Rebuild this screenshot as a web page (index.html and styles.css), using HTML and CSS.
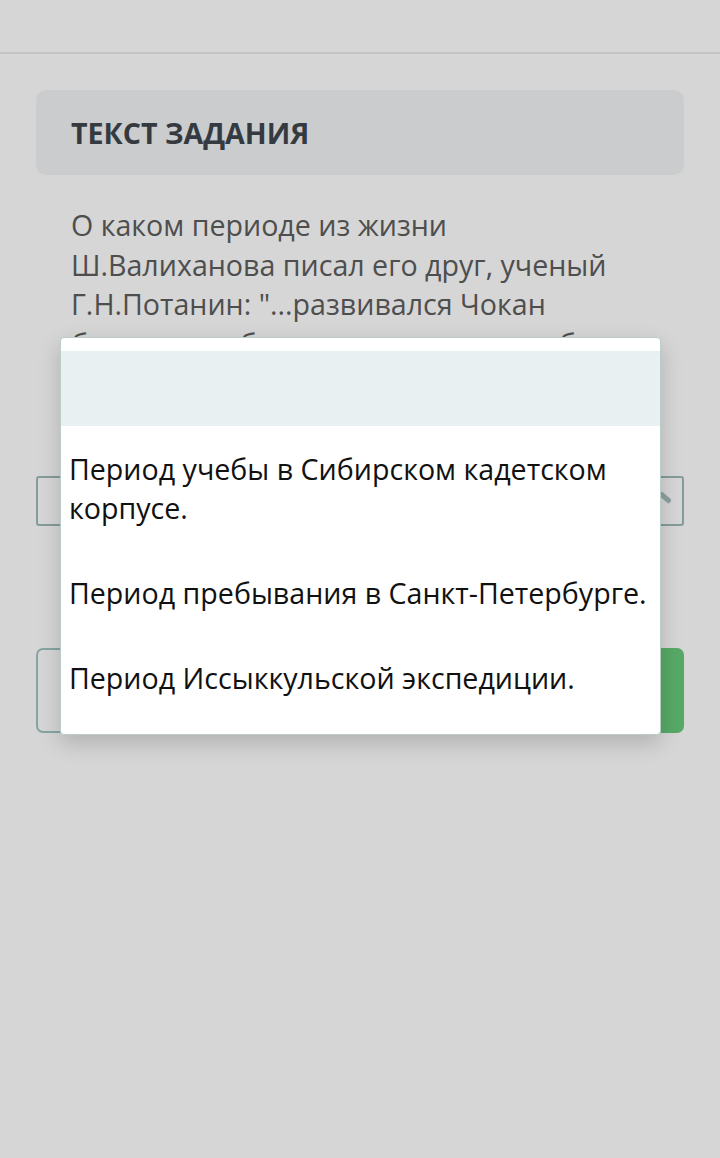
FILE: index.html
```html
<!DOCTYPE html>
<html lang="ru">
<head>
<meta charset="utf-8">
<title>Текст задания</title>
<link rel="stylesheet" href="styles.css">
</head>
<body>
<div class="topbar"></div>
<main class="content">
  <div class="task-head">ТЕКСТ ЗАДАНИЯ</div>
  <p class="question">О каком периоде из жизни Ш.Валиханова писал его друг, ученый Г.Н.Потанин: "...развивался Чокан быстро, как будто в его голове все было приготовлено"?</p>
  <div class="select">
    <span class="arrow"></span>
  </div>
  <div class="actions">
    <div class="btn-outline"></div>
    <div class="btn-green"></div>
  </div>
</main>
<div class="popup">
  <div class="opt opt-empty"></div>
  <div class="opt">Период учебы в Сибирском кадетском корпусе.</div>
  <div class="opt">Период пребывания в Санкт-Петербурге.</div>
  <div class="opt">Период Иссыккульской экспедиции.</div>
</div>
</body>
</html>
```

FILE: styles.css
```css
html, body {
  margin: 0;
  padding: 0;
}
body {
  background: #d6d6d6;
  font-family: "Open Sans", "Noto Sans", sans-serif;
  width: 720px;
  height: 1158px;
  position: relative;
  overflow: hidden;
}
.topbar {
  height: 52px;
  border-bottom: 2px solid #c4c4c4;
}
.content {
  padding: 36px 36px 0 36px;
  display: flex;
  flex-direction: column;
}
.task-head {
  background: #cbcccd;
  border-radius: 10px;
  height: 85px;
  display: flex;
  align-items: center;
  padding-left: 35px;
  font-weight: 700;
  font-size: 28.6px;
  color: #343a40;
}
.question {
  margin: 30px 0 0 0;
  padding: 0 35px;
  font-size: 28.6px;
  line-height: 39.5px;
  color: #4e4e4e;
  height: 234px;
  overflow: hidden;
}
.select {
  margin-top: 37px;
  height: 46px;
  border: 2px solid #869b9b;
  border-radius: 3px;
  position: relative;
}
.arrow {
  position: absolute;
  right: 10px;
  top: 17px;
  width: 14px;
  height: 5px;
  background: #8fa0a2;
  transform: rotate(40deg);
  border-radius: 2px;
}
.actions {
  margin-top: 122px;
  display: flex;
  gap: 12px;
  height: 85px;
}
.btn-outline {
  flex: 1;
  border: 2px solid #86a5a2;
  border-radius: 7px;
}
.btn-green {
  flex: 1;
  background: #57a966;
  border-radius: 7px;
}
.popup {
  position: absolute;
  left: 60px;
  top: 337px;
  width: 599px;
  background: #ffffff;
  border: 1px solid #b9cec9;
  border-radius: 4px;
  padding: 13px 0 14px 0;
  box-shadow: 0 8px 22px rgba(0, 0, 0, 0.18);
}
.opt {
  padding: 23px 8px;
  font-size: 28.6px;
  line-height: 39px;
  color: #111111;
}
.opt-empty {
  height: 75px;
  padding: 0;
  background: #e8f0f2;
}
```
